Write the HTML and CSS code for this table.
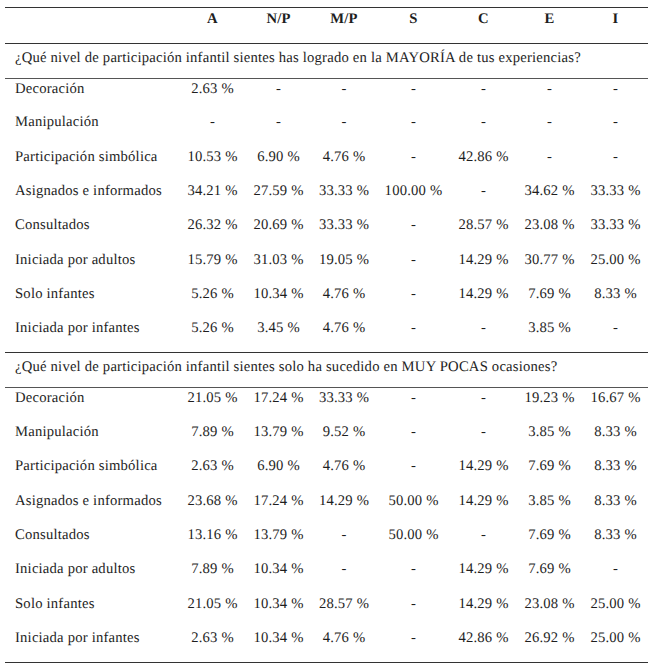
FILE: index.html
```html
<!DOCTYPE html>
<html lang="es">
<head>
<meta charset="utf-8">
<title>Participación infantil</title>
<link rel="stylesheet" href="styles.css">
</head>
<body>
<table class="tbl">
  <colgroup>
    <col class="c-label"><col class="c-a"><col class="c-np"><col class="c-mp"><col class="c-s"><col class="c-c"><col class="c-e"><col class="c-i">
  </colgroup>
  <thead>
    <tr class="head">
      <th></th><th>A</th><th>N/P</th><th>M/P</th><th>S</th><th>C</th><th>E</th><th>I</th>
    </tr>
  </thead>
  <tbody>
    <tr class="q"><td colspan="8">¿Qué nivel de participación infantil sientes has logrado en la MAYORÍA de tus experiencias?</td></tr>
    <tr class="first"><td>Decoración</td><td>2.63 %</td><td>-</td><td>-</td><td>-</td><td>-</td><td>-</td><td>-</td></tr>
    <tr><td>Manipulación</td><td>-</td><td>-</td><td>-</td><td>-</td><td>-</td><td>-</td><td>-</td></tr>
    <tr><td>Participación simbólica</td><td>10.53 %</td><td>6.90 %</td><td>4.76 %</td><td>-</td><td>42.86 %</td><td>-</td><td>-</td></tr>
    <tr><td>Asignados e informados</td><td>34.21 %</td><td>27.59 %</td><td>33.33 %</td><td>100.00 %</td><td>-</td><td>34.62 %</td><td>33.33 %</td></tr>
    <tr><td>Consultados</td><td>26.32 %</td><td>20.69 %</td><td>33.33 %</td><td>-</td><td>28.57 %</td><td>23.08 %</td><td>33.33 %</td></tr>
    <tr><td>Iniciada por adultos</td><td>15.79 %</td><td>31.03 %</td><td>19.05 %</td><td>-</td><td>14.29 %</td><td>30.77 %</td><td>25.00 %</td></tr>
    <tr><td>Solo infantes</td><td>5.26 %</td><td>10.34 %</td><td>4.76 %</td><td>-</td><td>14.29 %</td><td>7.69 %</td><td>8.33 %</td></tr>
    <tr><td>Iniciada por infantes</td><td>5.26 %</td><td>3.45 %</td><td>4.76 %</td><td>-</td><td>-</td><td>3.85 %</td><td>-</td></tr>
    <tr class="q q2"><td colspan="8">¿Qué nivel de participación infantil sientes solo ha sucedido en MUY POCAS ocasiones?</td></tr>
    <tr class="first"><td>Decoración</td><td>21.05 %</td><td>17.24 %</td><td>33.33 %</td><td>-</td><td>-</td><td>19.23 %</td><td>16.67 %</td></tr>
    <tr><td>Manipulación</td><td>7.89 %</td><td>13.79 %</td><td>9.52 %</td><td>-</td><td>-</td><td>3.85 %</td><td>8.33 %</td></tr>
    <tr><td>Participación simbólica</td><td>2.63 %</td><td>6.90 %</td><td>4.76 %</td><td>-</td><td>14.29 %</td><td>7.69 %</td><td>8.33 %</td></tr>
    <tr><td>Asignados e informados</td><td>23.68 %</td><td>17.24 %</td><td>14.29 %</td><td>50.00 %</td><td>14.29 %</td><td>3.85 %</td><td>8.33 %</td></tr>
    <tr><td>Consultados</td><td>13.16 %</td><td>13.79 %</td><td>-</td><td>50.00 %</td><td>-</td><td>7.69 %</td><td>8.33 %</td></tr>
    <tr><td>Iniciada por adultos</td><td>7.89 %</td><td>10.34 %</td><td>-</td><td>-</td><td>14.29 %</td><td>7.69 %</td><td>-</td></tr>
    <tr><td>Solo infantes</td><td>21.05 %</td><td>10.34 %</td><td>28.57 %</td><td>-</td><td>14.29 %</td><td>23.08 %</td><td>25.00 %</td></tr>
    <tr class="last"><td>Iniciada por infantes</td><td>2.63 %</td><td>10.34 %</td><td>4.76 %</td><td>-</td><td>42.86 %</td><td>26.92 %</td><td>25.00 %</td></tr>
  </tbody>
</table>
</body>
</html>
```

FILE: styles.css
```css
html, body {
  margin: 0;
  padding: 0;
  background: #fff;
}

body {
  font-family: Tinos, "Liberation Serif", "Times New Roman", serif;
  font-size: 14.67px;
  color: #1e1e1e;
  text-rendering: geometricPrecision;
}

.tbl {
  border-collapse: collapse;
  table-layout: fixed;
  width: 643px;
  margin: 7px 0 0 5px;
  font-family: Tinos, "Liberation Serif", "Times New Roman", serif;
  letter-spacing: 0.2px;
}

.c-label { width: 175px; }
.c-a { width: 65px; }
.c-np { width: 67px; }
.c-mp { width: 64px; }
.c-s { width: 75px; }
.c-c { width: 65px; }
.c-e { width: 67px; }
.c-i { width: 65px; }

.tbl th,
.tbl td {
  padding: 2px 0 0;
  line-height: 17px;
  vertical-align: top;
  text-align: center;
  white-space: nowrap;
  height: 34.35px;
  box-sizing: border-box;
}

.tbl td:first-child {
  text-align: left;
  padding-left: 10px;
}

.head th {
  font-weight: bold;
  height: 35.5px;
  padding-top: 3px;
  border-top: 1px solid #333;
  border-bottom: 1px solid #333;
}

.q td {
  height: 35px;
  padding-top: 6px;
  border-bottom: 1px solid #555;
}

.q2 td {
  border-top: 1px solid #333;
}

.last td {
  border-bottom: 1px solid #333;
}
```
